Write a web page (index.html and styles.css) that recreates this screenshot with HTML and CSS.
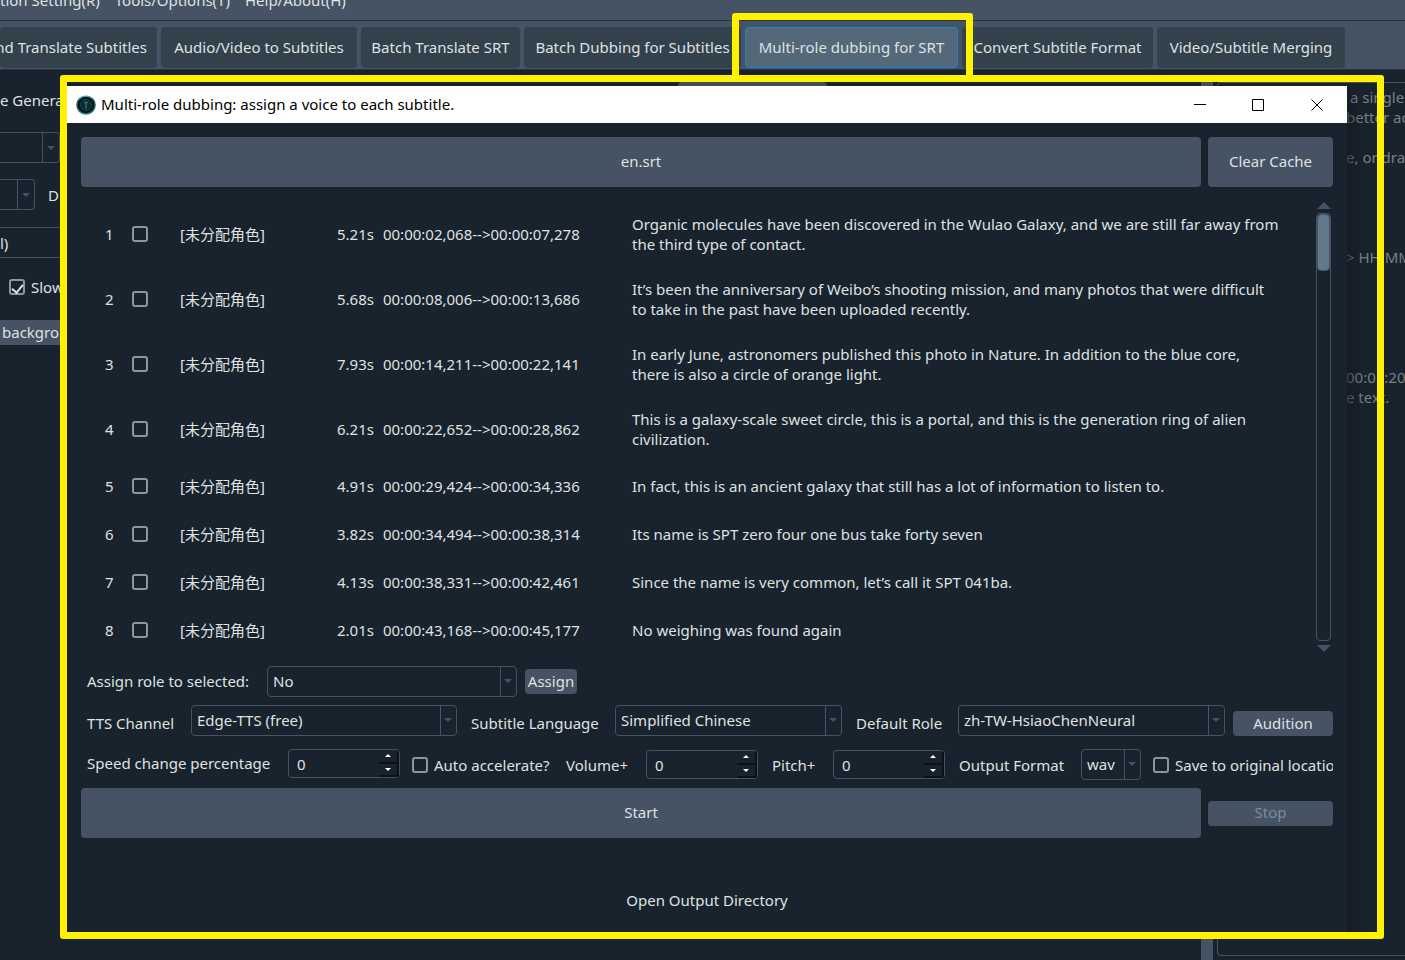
FILE: index.html
```html
<!DOCTYPE html>
<html lang="en">
<head>
<meta charset="utf-8">
<title>Multi-role dubbing</title>
<link rel="stylesheet" href="styles.css">
</head>
<body>
<div class="app">
  <nav class="menubar">
    <button class="menu">tion Setting(R)</button>
    <button class="menu">Tools/Options(T)</button>
    <button class="menu">Help/About(H)</button>
  </nav>
  <div class="toolbar">
    <button class="tool tool-cut">nd Translate Subtitles</button>
    <button class="tool">Audio/Video to Subtitles</button>
    <button class="tool">Batch Translate SRT</button>
    <button class="tool">Batch Dubbing for Subtitles</button>
    <button class="tool tool-active">Multi-role dubbing for SRT</button>
    <button class="tool">Convert Subtitle Format</button>
    <button class="tool">Video/Subtitle Merging</button>
  </div>
  <main class="workspace">
    <section class="settings">
      <p class="heading">e Genera</p>
      <div class="pick pick-wide"><i class="arrow"></i></div>
      <div class="pair"><div class="pick pick-short"><i class="arrow"></i></div><span>D</span></div>
      <div class="pick pick-text">l)</div>
      <label class="check slow"><input type="checkbox" checked>Slow</label>
      <p class="strip">backgro</p>
    </section>
    <section class="center"><div class="center-tab"></div></section>
    <div class="splitter"></div>
    <section class="editor">
<pre class="hint"> a single
better ac

e, or drag




&gt; HH:MM





00:01:20
e text.</pre>
    </section>
  </main>
</div>

<div class="mark-tab"></div>
<div class="mark-window">
  <section class="dialog" aria-label="Multi-role dubbing">
    <header class="titlebar">
      <svg class="logo" width="20" height="20" viewBox="0 0 20 20">
        <defs><linearGradient id="g" x1="0" y1="0" x2="0" y2="1"><stop offset="0" stop-color="#5fd0cf"/><stop offset=".3" stop-color="#1b5a5f"/><stop offset="1" stop-color="#2a8080"/></linearGradient></defs>
        <circle cx="10" cy="10" r="9.800" fill="url(#g)"/>
        <circle cx="10" cy="10" r="8.300" fill="#06151b"/>
        <circle cx="10" cy="10" r="5.500" fill="#0d2a33" stroke="#17454e"/>
        <path d="M8 7.500h4M10 7.500v6" stroke="#2f7079" stroke-width="1.400" fill="none"/>
      </svg>
      <h1 class="title">Multi-role dubbing: assign a voice to each subtitle.</h1>
      <button class="win" aria-label="Minimize"><svg width="12" height="12" viewBox="0 0 12 12"><path d="M0 5.500h12"/></svg></button>
      <button class="win" aria-label="Maximize"><svg width="12" height="12" viewBox="0 0 12 12"><path d="M.5.5h11v11H.5z"/></svg></button>
      <button class="win win-close" aria-label="Close"><svg width="12" height="12" viewBox="0 0 12 12"><path d="M.5.5l11 11M11.500.5l-11 11"/></svg></button>
    </header>
    <div class="body">
      <div class="actions">
        <button class="btn btn-tall">en.srt</button>
        <button class="btn btn-tall">Clear Cache</button>
      </div>
      <div class="list">
        <div class="rows">
          <div class="row"><span class="num">1</span><input type="checkbox" aria-label="Subtitle 1"><span>[未分配角色]</span><span class="time"><span>5.21s</span><span>00:00:02,068--&gt;00:00:07,278</span></span><p>Organic molecules have been discovered in the Wulao Galaxy, and we are still far away from<br>the third type of contact.</p></div>
          <div class="row"><span class="num">2</span><input type="checkbox" aria-label="Subtitle 2"><span>[未分配角色]</span><span class="time"><span>5.68s</span><span>00:00:08,006--&gt;00:00:13,686</span></span><p>It’s been the anniversary of Weibo’s shooting mission, and many photos that were difficult<br>to take in the past have been uploaded recently.</p></div>
          <div class="row"><span class="num">3</span><input type="checkbox" aria-label="Subtitle 3"><span>[未分配角色]</span><span class="time"><span>7.93s</span><span>00:00:14,211--&gt;00:00:22,141</span></span><p>In early June, astronomers published this photo in Nature. In addition to the blue core,<br>there is also a circle of orange light.</p></div>
          <div class="row"><span class="num">4</span><input type="checkbox" aria-label="Subtitle 4"><span>[未分配角色]</span><span class="time"><span>6.21s</span><span>00:00:22,652--&gt;00:00:28,862</span></span><p>This is a galaxy-scale sweet circle, this is a portal, and this is the generation ring of alien<br>civilization.</p></div>
          <div class="row"><span class="num">5</span><input type="checkbox" aria-label="Subtitle 5"><span>[未分配角色]</span><span class="time"><span>4.91s</span><span>00:00:29,424--&gt;00:00:34,336</span></span><p>In fact, this is an ancient galaxy that still has a lot of information to listen to.</p></div>
          <div class="row"><span class="num">6</span><input type="checkbox" aria-label="Subtitle 6"><span>[未分配角色]</span><span class="time"><span>3.82s</span><span>00:00:34,494--&gt;00:00:38,314</span></span><p>Its name is SPT zero four one bus take forty seven</p></div>
          <div class="row"><span class="num">7</span><input type="checkbox" aria-label="Subtitle 7"><span>[未分配角色]</span><span class="time"><span>4.13s</span><span>00:00:38,331--&gt;00:00:42,461</span></span><p>Since the name is very common, let’s call it SPT 041ba.</p></div>
          <div class="row"><span class="num">8</span><input type="checkbox" aria-label="Subtitle 8"><span>[未分配角色]</span><span class="time"><span>2.01s</span><span>00:00:43,168--&gt;00:00:45,177</span></span><p>No weighing was found again</p></div>
        </div>
        <div class="scroll"><i class="tri-up"></i><div class="track"><div class="thumb"></div></div><i class="tri-down"></i></div>
      </div>

      <div class="form form-assign">
        <label for="role">Assign role to selected:</label>
        <span class="combo"><select id="role"><option>No</option></select></span>
        <button class="btn btn-assign">Assign</button>
      </div>
      <div class="form form-tts">
        <label for="tts">TTS Channel</label>
        <span class="combo"><select id="tts"><option>Edge-TTS (free)</option></select></span>
        <label class="inset" for="lang">Subtitle Language</label>
        <span class="combo"><select id="lang"><option>Simplified Chinese</option></select></span>
        <label class="inset" for="defrole">Default Role</label>
        <span class="combo"><select id="defrole"><option>zh-TW-HsiaoChenNeural</option></select></span>
        <button class="btn btn-audition">Audition</button>
      </div>
      <div class="form form-out">
        <label class="raised" for="speed">Speed change percentage</label>
        <span class="spin raised"><input id="speed" type="number" value="0"><span class="steps"><button aria-label="Increase speed"><i class="up"></i></button><button aria-label="Decrease speed"><i class="down"></i></button></span></span>
        <label class="check inset"><input type="checkbox">Auto accelerate?</label>
        <label class="volume" for="vol">Volume+</label>
        <span class="spin"><input id="vol" type="number" value="0"><span class="steps"><button aria-label="Increase volume"><i class="up"></i></button><button aria-label="Decrease volume"><i class="down"></i></button></span></span>
        <label class="inset" for="pitch">Pitch+</label>
        <span class="spin"><input id="pitch" type="number" value="0"><span class="steps"><button aria-label="Increase pitch"><i class="up"></i></button><button aria-label="Decrease pitch"><i class="down"></i></button></span></span>
        <label class="inset" for="fmt">Output Format</label>
        <span class="combo"><select id="fmt"><option>wav</option></select></span>
        <label class="check inset"><input type="checkbox">Save to original location</label>
      </div>
      <div class="actions">
        <button class="btn btn-tall">Start</button>
        <button class="btn" disabled>Stop</button>
      </div>
      <button class="open">Open Output Directory</button>
    </div>
  </section>
</div>
</body>
</html>
```
FILE: styles.css
```css
* { box-sizing: border-box; }
body {
  margin: 0;
  background: #19232d;
  color: #dfe1e2;
  font: 15px/20px "Noto Sans", "Noto Sans CJK SC", sans-serif;
  overflow: hidden;
}
button, input, select { font: inherit; color: inherit; margin: 0; }
button { border: 0; padding: 0; background: none; white-space: nowrap; }
p, h1, pre { margin: 0; font: inherit; }

.app { height: 100vh; display: flex; flex-direction: column; overflow: hidden; }
.menubar { display: flex; gap: 15px; height: 21px; flex: none; background: #455364; border-bottom: 1px solid #28333f; overflow: hidden; }
.menu { height: 20px; margin-top: -10px; }
.toolbar {
  display: grid;
  grid-template-columns: 157px 196px 159px 217px 213px 191px 188px;
  gap: 4px;
  flex: none;
  padding: 6px 0 1px;
  background: #455364;
  border-bottom: 1px solid #28333f;
}
.tool { height: 41px; padding-bottom: 2px; border-radius: 4px; background: #32414b; }
.tool-cut { display: flex; align-items: center; justify-content: flex-end; padding-right: 10px; }
.tool-active { background: #54687a; border: 1px solid #1a86d0; }

.workspace { flex: 1; display: grid; grid-template-columns: 60px 1fr 12px 192px; min-height: 0; }
.settings { padding-top: 20px; overflow: hidden; white-space: nowrap; }
.pick { display: flex; justify-content: flex-end; height: 31px; border: 1px solid #455364; border-left: 0; border-radius: 0 4px 4px 0; }
.pick-wide { margin-top: 22px; }
.arrow { display: flex; align-items: center; justify-content: center; width: 17px; border-left: 1px solid #455364; }
.arrow::after { content: ""; border: 4px solid transparent; border-top-color: #455364; border-bottom: 0; }
.pair { display: flex; align-items: center; gap: 13px; margin-top: 16px; }
.pick-short { width: 35px; }
.pick-text { justify-content: flex-start; align-items: center; margin-top: 17px; border-right: 0; border-radius: 0; }
.slow { padding-left: 9px; margin-top: 19px; }
.strip { margin-top: 23px; height: 25px; line-height: 25px; padding-left: 2px; background: #455364; }
.center { padding: 12px 0 0 618px; }
.center-tab { width: 149px; height: 30px; border-radius: 4px; background: #455364; }
.splitter { margin-top: 12px; background: #455364; }
.editor { margin: 12px 0 4px 4px; border: 1px solid #455364; border-right: 0; border-radius: 4px 0 0 4px; padding: 4px 0 0 128px; overflow: hidden; }
.hint { color: #788086; }

.mark-tab { position: absolute; top: 13px; left: 732px; width: 241px; height: 69px; border: 7px solid #fff200; border-radius: 3px; z-index: 2; pointer-events: none; }
.mark-window { position: absolute; inset: 75px 21px 21px 60px; border: 7px solid #fff200; border-radius: 3px; padding: 4px 30px 0 0; overflow: hidden; }
.dialog { height: 100%; background: #19232d; box-shadow: 0 12px 16px 2px #12161f; }
.titlebar { display: flex; align-items: center; height: 37px; padding: 0 1px 0 9px; background: #fff; color: #000; }
.title { flex: 1; margin-left: 5px; padding-bottom: 2px; white-space: nowrap; }
.win { width: 58px; height: 36px; display: flex; align-items: center; justify-content: center; }
.win-close { width: 59px; }
.win svg { fill: none; stroke: #000; }

.body { display: flex; flex-direction: column; padding: 14px 14px 0; }
.actions { display: grid; grid-template-columns: 1fr 125px; gap: 7px; align-items: center; }
.btn { height: 25px; padding-bottom: 2px; border-radius: 4px; background: #455364; }
.btn:disabled { color: #788d9c; }
.btn-tall { height: 50px; }

.list { display: flex; margin-top: 15px; }
.rows { flex: 1; min-width: 0; }
.row {
  display: grid;
  grid-template-columns: 24px 27px 48px 157px 295px 1fr;
  align-items: center;
  min-height: 48px;
  padding: 12px 0 13px;
  white-space: nowrap;
}
.row:nth-child(n+5) { padding: 0 0 1px; }
.row .num { grid-column: 2; }
.time { display: flex; gap: 9px; }
input[type="checkbox"] {
  appearance: none;
  flex: none;
  width: 16px;
  height: 16px;
  border: 2px solid #8f969b;
  border-radius: 3px;
  background: none;
}
input[type="checkbox"]:checked { display: grid; place-items: center; }
input[type="checkbox"]:checked::after { content: ""; width: 5px; height: 9px; border: solid #dfe1e2; border-width: 0 2px 2px 0; transform: rotate(40deg); }
.scroll { width: 15px; height: 450px; margin: 0 2px 0 0; display: flex; flex-direction: column; align-items: center; gap: 4px; }
.tri-up { border: 7px solid transparent; border-bottom-color: #455364; border-top: 0; }
.tri-down { border: 7px solid transparent; border-top-color: #455364; border-bottom: 0; }
.track { flex: 1; width: 15px; border: 1px solid #455364; border-radius: 4px; }
.thumb { height: 57px; background: #60798b; border: 1px solid #455364; border-radius: 4px; }

.form { display: grid; align-items: center; padding-left: 6px; white-space: nowrap; }
.form-assign { grid-template-columns: 180px 250px 60px; margin-top: 12px; }
.form-assign label { padding-bottom: 1px; }
.btn-assign, .btn-audition { margin-left: 8px; }
.form-tts { grid-template-columns: 104px minmax(0, 266fr) 158px minmax(0, 227fr) 116px minmax(0, 267fr) 108px; align-items: end; margin-top: 8px; }
.form-tts label { line-height: 26px; }
.form-out { grid-template-columns: 201px 112px 154px 92px 112px 75px 112px 136px 60px minmax(0, 1fr); margin: 13px 0 8px; }
.raised { align-self: start; }
label.raised { line-height: 28px; }
.inset { padding-left: 14px; }
.volume { padding-left: 12px; }
.check { display: flex; align-items: center; gap: 6px; }
.check.inset { padding-left: 12px; overflow: hidden; }
.combo { position: relative; height: 31px; }
.combo select { appearance: none; display: block; width: 100%; height: 100%; padding: 0 18px 2px 5px; border: 1px solid #455364; border-radius: 4px; background: none; }
.combo::before { content: ""; position: absolute; right: 16px; top: 1px; bottom: 1px; border-left: 1px solid #455364; }
.combo::after { content: ""; position: absolute; right: 5px; top: 13px; border: 4px solid transparent; border-top-color: #455364; border-bottom: 0; }
.spin { display: flex; height: 29px; border: 1px solid #455364; border-radius: 4px; overflow: hidden; }
.spin input { appearance: textfield; flex: 1; min-width: 0; border: 0; padding: 0 0 0 8px; background: none; }
.spin input::-webkit-inner-spin-button { appearance: none; }
.steps { width: 20px; display: grid; grid-template-rows: 1fr 1fr; }
.steps button { display: flex; align-items: center; justify-content: center; border: solid #0c1116; border-width: 0 2px 2px 0; }
.up { border: 3px solid transparent; border-bottom-color: #fff; border-top: 0; }
.down { border: 3px solid transparent; border-top-color: #fff; border-bottom: 0; }
.open { align-self: center; margin-top: 52px; }
```
